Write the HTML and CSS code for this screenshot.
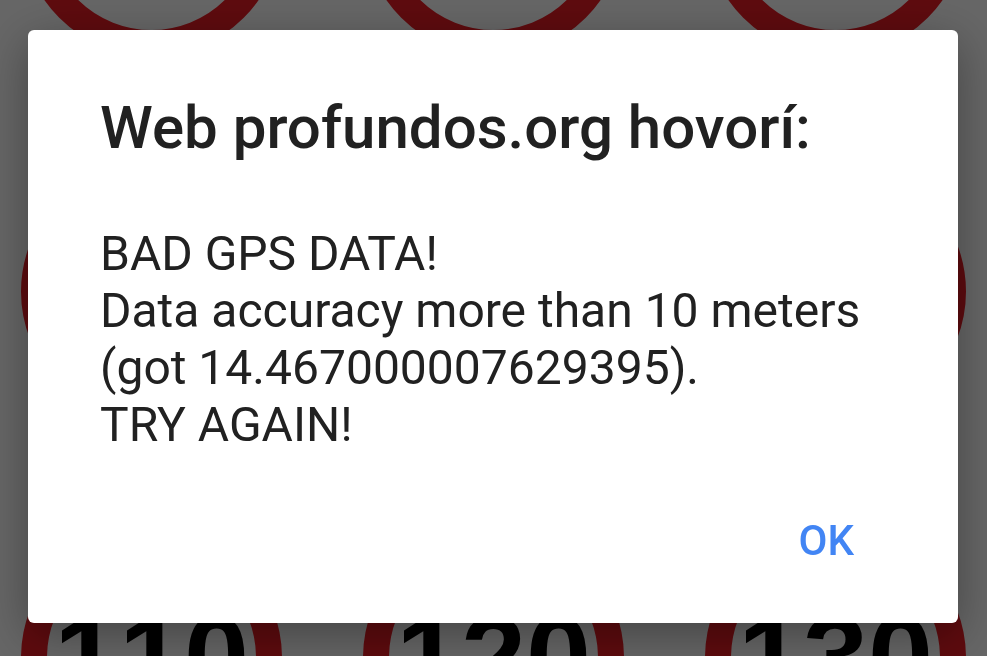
FILE: index.html
```html
<!DOCTYPE html>
<html lang="sk">
<head>
  <meta charset="UTF-8" />
  <meta name="viewport" content="width=device-width, initial-scale=1" />
  <title>profundos.org</title>
  <link rel="stylesheet" href="styles.css">
</head>
<body>
  <main class="signs">
    <div class="sign"></div>
    <div class="sign"></div>
    <div class="sign"></div>
    <div class="sign"></div>
    <div class="sign"></div>
    <div class="sign"></div>
    <div class="sign">110</div>
    <div class="sign">120</div>
    <div class="sign">130</div>
  </main>

  <div class="overlay">
    <div class="dialog" role="alertdialog" aria-modal="true" aria-labelledby="dialogTitle" aria-describedby="dialogText">
      <h1 id="dialogTitle">Web profundos.org hovorí:</h1>
      <p id="dialogText">BAD GPS DATA!<br>Data accuracy more than 10 meters (got 14.467000007629395).<br>TRY AGAIN!</p>
      <div class="actions">
        <button type="button">OK</button>
      </div>
    </div>
  </div>
</body>
</html>
```

FILE: styles.css
```css
* {
  box-sizing: border-box;
}
body {
  margin: 0;
  height: 100vh;
  overflow: hidden;
  background: #fff;
  font-family: Roboto, "Liberation Sans", sans-serif;
}

/* speed limit signs, scrolled up behind the dialog */
.signs {
  display: grid;
  grid-template-columns: repeat(3, auto);
  justify-content: space-between;
  row-gap: 105px;
  padding: 0 21px;
  margin-top: -205px;
}
.sign {
  display: flex;
  align-items: center;
  justify-content: center;
  width: 261px;
  height: 261px;
  border: 26px solid #eb1c24;
  border-radius: 50%;
  color: #000;
  font-family: "Liberation Sans", Arial, sans-serif;
  font-size: 117px;
  font-weight: bold;
  font-kerning: none;
  line-height: 1;
}

/* dimmed layer */
.overlay {
  position: fixed;
  inset: 0;
  display: flex;
  padding: 30px 29px 33px 28px;
  background: rgba(0, 0, 0, 0.6);
}

/* alert dialog */
.dialog {
  flex: 1;
  display: flex;
  flex-direction: column;
  padding: 60px 72px 48px;
  background: #fff;
  border-radius: 6px;
  box-shadow: 0 12px 48px rgba(0, 0, 0, 0.35);
  color: #212121;
}
h1 {
  margin: 0 0 59px;
  font-size: 60px;
  font-weight: 500;
  line-height: 76px;
}
p {
  margin: 0;
  font-size: 48px;
  line-height: 57px;
}
.actions {
  display: flex;
  justify-content: flex-end;
  margin-top: auto;
}
button {
  padding: 0 32px;
  border: none;
  background: none;
  color: #4285f4;
  font-family: inherit;
  font-size: 42px;
  font-weight: 500;
  line-height: 68px;
}
```
